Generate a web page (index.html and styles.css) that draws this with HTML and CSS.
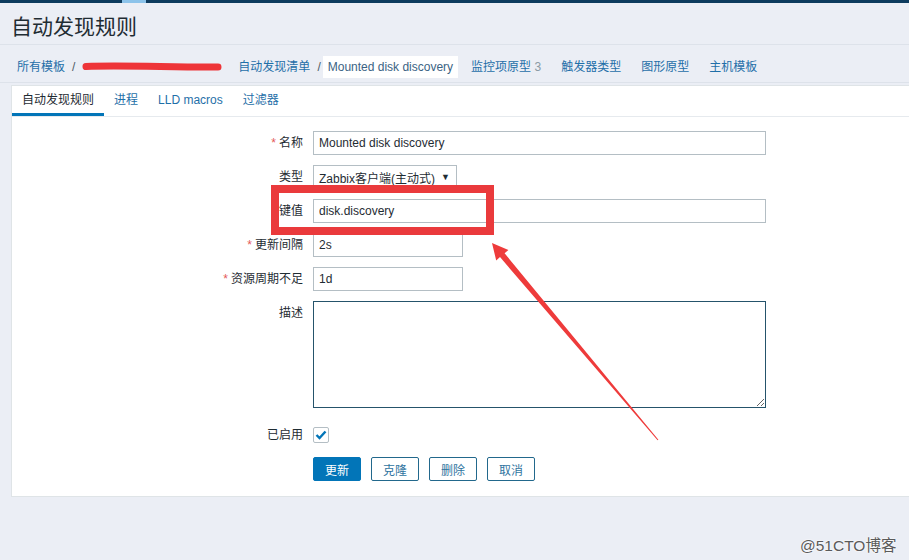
FILE: index.html
```html
<!DOCTYPE html>
<html lang="zh-CN">
<head>
  <meta charset="UTF-8">
  <title>自动发现规则</title>
  <link rel="stylesheet" href="styles.css">
</head>
<body>

  <div class="topbar"><span class="topbar-mark"></span></div>

  <header class="header">
    <h1>自动发现规则</h1>
  </header>

  <!-- Breadcrumbs -->
  <nav class="crumbs">
    <a href="#">所有模板</a>
    <span class="sep">/</span>
    <span class="redacted">
      <svg width="140" height="14" viewBox="0 0 140 14">
        <path d="M4 6.5 C 40 5, 95 7.5, 136 7" stroke="#ee3438" stroke-width="7" stroke-linecap="round" fill="none"/>
      </svg>
    </span>
    <a href="#">自动发现清单</a>
    <span class="sep sep-last">/</span>
    <span class="crumb-current">Mounted disk discovery</span>
    <a href="#">监控项原型 <span class="count">3</span></a>
    <a href="#">触发器类型</a>
    <a href="#">图形原型</a>
    <a href="#">主机模板</a>
  </nav>

  <section class="panel">
    <div class="tabs">
      <span class="tab active">自动发现规则</span>
      <a href="#" class="tab">进程</a>
      <a href="#" class="tab">LLD macros</a>
      <a href="#" class="tab">过滤器</a>
    </div>

    <form class="form">
      <div class="row">
        <label class="label"><span class="req">*</span>名称</label>
        <input class="field wide" type="text" value="Mounted disk discovery">
      </div>
      <div class="row">
        <label class="label">类型</label>
        <div class="select"><span>Zabbix客户端(主动式)</span><span class="caret">▼</span></div>
      </div>
      <div class="row">
        <label class="label">键值</label>
        <input class="field wide" type="text" value="disk.discovery">
      </div>
      <div class="row">
        <label class="label"><span class="req">*</span>更新间隔</label>
        <input class="field short" type="text" value="2s">
      </div>
      <div class="row">
        <label class="label"><span class="req">*</span>资源周期不足</label>
        <input class="field short" type="text" value="1d">
      </div>
      <div class="row row-text">
        <label class="label">描述</label>
        <textarea class="field wide area"></textarea>
      </div>
      <div class="row row-check">
        <label class="label">已启用</label>
        <span class="checkbox">
          <svg width="12" height="10" viewBox="0 0 12 10">
            <path d="M1.5 5 L4.5 8 L10.5 1.5" stroke="#0275b8" stroke-width="2.4" fill="none"/>
          </svg>
        </span>
      </div>
      <div class="row row-buttons">
        <span class="label"></span>
        <div class="buttons">
          <button type="button" class="btn primary">更新</button>
          <button type="button" class="btn">克隆</button>
          <button type="button" class="btn">删除</button>
          <button type="button" class="btn">取消</button>
        </div>
      </div>
    </form>
  </section>

  <!-- annotation drawn over the screenshot -->
  <svg class="marks" width="909" height="560" viewBox="0 0 909 560">
    <rect x="275" y="189" width="215" height="42" fill="none" stroke="#ea3a3c" stroke-width="8"/>
    <polygon points="492,243 508.4,250 504.6,253.3 658.4,439.7 657.6,440.3 500,257.1 496.2,260.4" fill="#ee3b3b"/>
  </svg>

  <div class="watermark">@51CTO博客</div>

</body>
</html>
```

FILE: styles.css
```css
body {
  margin: 0;
  font-family: 'Liberation Sans', 'Noto Sans CJK SC', sans-serif;
  font-size: 12px;
  background-color: #ebeef5;
  color: #1f2c33;
  height: 560px;
  overflow: hidden;
}

a {
  color: #1f6fa8;
  text-decoration: none;
}

.topbar {
  height: 3px;
  background-color: #0d3b5e;
}

.topbar-mark {
  display: block;
  width: 24px;
  height: 3px;
  margin-left: 122px;
  background-color: #8cc3ea;
}

.header {
  height: 41px;
  padding: 0 11px;
  border-bottom: 1px solid #dde2ea;
}

.header h1 {
  margin: 0;
  padding-top: 12px;
  font-size: 21px;
  line-height: 24px;
  font-weight: normal;
  color: #1f2c33;
}

/* Breadcrumbs */
.crumbs {
  display: flex;
  align-items: center;
  height: 30px;
  padding: 7px 0 0 17px;
  border-bottom: 1px solid #dde2ea;
}

.crumbs a {
  margin-right: 20px;
  line-height: 22px;
}

.crumbs .sep {
  color: #4b5a64;
  margin: 0 7px 0 -13px;
}

.crumbs .sep-last {
  margin-right: 2px;
}

.redacted {
  display: flex;
  width: 140px;
  margin-right: 16px;
}

.crumb-current {
  background-color: #fff;
  color: #3b6384;
  padding: 0 5px;
  line-height: 22px;
  margin-right: 13px;
}

.count {
  color: #8a9aa4;
}

/* Panel */
.panel {
  margin: 2px 0 0 11px;
  background-color: #fff;
  border: 1px solid #dfe4e7;
  border-right: none;
}

.tabs {
  display: flex;
  height: 30px;
  border-bottom: 1px solid #e6eaee;
}

.tab {
  padding: 0 10px;
  line-height: 29px;
  border-bottom: 3px solid transparent;
}

.tab.active {
  color: #1f2c33;
  border-bottom-color: #0275b8;
}

.form {
  padding: 14px 0 15px;
}

.row {
  display: flex;
  align-items: flex-start;
  margin-bottom: 10px;
}

.label {
  width: 291px;
  margin-right: 10px;
  text-align: right;
  line-height: 24px;
  flex-shrink: 0;
}

.req {
  color: #e45959;
  margin-right: 3px;
}

.field {
  box-sizing: border-box;
  height: 24px;
  margin: 0;
  padding: 0 5px;
  border: 1px solid #b4bec4;
  font-family: inherit;
  font-size: 12px;
  color: #1f2c33;
  background-color: #fff;
}

.wide {
  width: 453px;
}

.short {
  width: 150px;
}

.area {
  height: 107px;
  border-color: #25536b;
  resize: both;
}

.select {
  box-sizing: border-box;
  display: flex;
  align-items: center;
  justify-content: space-between;
  width: 144px;
  height: 24px;
  padding: 0 6px 0 5px;
  border: 1px solid #b4bec4;
}

.caret {
  font-size: 9px;
  color: #1f2c33;
}

.row-text {
  margin-bottom: 19px;
}

.row-check .label {
  line-height: 16px;
}

.checkbox {
  box-sizing: border-box;
  display: flex;
  align-items: center;
  justify-content: center;
  width: 16px;
  height: 16px;
  border: 1px solid #b4bec4;
  border-radius: 2px;
}

.row-check {
  margin-bottom: 14px;
}

.row-buttons {
  margin-bottom: 0;
}

.buttons {
  display: flex;
  gap: 10px;
}

.btn {
  box-sizing: border-box;
  width: 48px;
  height: 24px;
  padding: 0;
  border: 1px solid #22688c;
  border-radius: 2px;
  background-color: #fff;
  color: #2f74a0;
  font-family: inherit;
  font-size: 12px;
}

.btn.primary {
  background-color: #0275b8;
  border-color: #0275b8;
  color: #fff;
}

.marks {
  position: absolute;
  top: 0;
  left: 0;
  pointer-events: none;
}

.watermark {
  position: absolute;
  left: 800px;
  top: 533px;
  font-size: 15.5px;
  color: #5a5a5a;
  text-shadow: 0 0 2px #fff, 0 0 2px #fff;
}
```
